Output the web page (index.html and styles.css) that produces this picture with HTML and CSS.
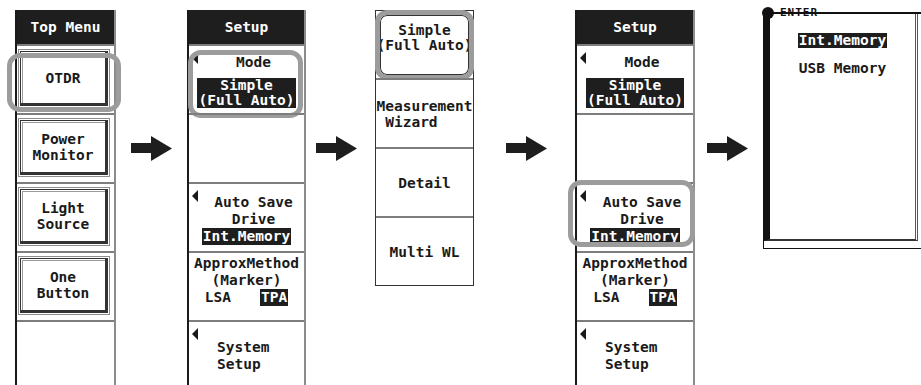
FILE: index.html
```html
<!DOCTYPE html>
<html>

<head>
  <meta charset="UTF-8">
  <title>OTDR Setup</title>
  <link rel="stylesheet" href="styles.css">
</head>

<body>

  <div id="topMenu" class="menu">
    <div class="menu-head">Top Menu</div>
    <div class="slot">
      <div class="btn"><div class="btn-face">OTDR</div></div>
      <div id="markOtdr" class="mark"></div>
    </div>
    <div class="slot">
      <div class="btn"><div class="btn-face">Power<br>Monitor</div></div>
    </div>
    <div class="slot">
      <div class="btn"><div class="btn-face">Light<br>Source</div></div>
    </div>
    <div class="slot">
      <div class="btn"><div class="btn-face">One<br>Button</div></div>
    </div>
    <div class="slot"></div>
  </div>

  <svg id="arrow1" class="arrow" viewBox="0 0 41 25"><rect x="0" y="7" width="22" height="10" /><polygon points="20,0 41,12.5 20,25" /></svg>

  <div id="setupA" class="menu">
    <div class="menu-head">Setup</div>
    <div class="slot mode">
      <span class="tri"></span>
      <div class="label">Mode</div>
      <div class="value two">Simple<br>(Full Auto)</div>
      <div id="markMode" class="mark"></div>
    </div>
    <div class="slot"></div>
    <div class="slot save">
      <span class="tri"></span>
      <div class="label">Auto Save</div>
      <div class="label">Drive</div>
      <div class="value">Int.Memory</div>
    </div>
    <div class="slot approx">
      <div>ApproxMethod</div>
      <div>(Marker)</div>
      <div class="pair"><span>LSA</span><span class="value">TPA</span></div>
    </div>
    <div class="slot system">
      <span class="tri"></span>
      <div>System<br>Setup</div>
    </div>
  </div>

  <svg id="arrow2" class="arrow" viewBox="0 0 41 25"><rect x="0" y="7" width="22" height="10" /><polygon points="20,0 41,12.5 20,25" /></svg>

  <div id="modes">
    <div class="choice first">
      <div>Simple<br>(Full Auto)</div>
      <div id="markSimple" class="mark"></div>
    </div>
    <div class="choice"><div class="pre">Measurement
 Wizard</div></div>
    <div class="choice"><div>Detail</div></div>
    <div class="choice"><div>Multi WL</div></div>
  </div>

  <svg id="arrow3" class="arrow" viewBox="0 0 41 25"><rect x="0" y="7" width="22" height="10" /><polygon points="20,0 41,12.5 20,25" /></svg>

  <div id="setupB" class="menu">
    <div class="menu-head">Setup</div>
    <div class="slot mode">
      <span class="tri"></span>
      <div class="label">Mode</div>
      <div class="value two">Simple<br>(Full Auto)</div>
    </div>
    <div class="slot"></div>
    <div class="slot save">
      <span class="tri"></span>
      <div class="label">Auto Save</div>
      <div class="label">Drive</div>
      <div class="value">Int.Memory</div>
      <div id="markSave" class="mark"></div>
    </div>
    <div class="slot approx">
      <div>ApproxMethod</div>
      <div>(Marker)</div>
      <div class="pair"><span>LSA</span><span class="value">TPA</span></div>
    </div>
    <div class="slot system">
      <span class="tri"></span>
      <div>System<br>Setup</div>
    </div>
  </div>

  <svg id="arrow4" class="arrow" viewBox="0 0 41 25"><rect x="0" y="7" width="22" height="10" /><polygon points="20,0 41,12.5 20,25" /></svg>

  <div id="drive">
    <span class="enter-dot"></span>
    <span class="enter-text">ENTER</span>
    <div class="drive-body">
      <div><span class="value">Int.Memory</span></div>
      <div class="usb">USB Memory</div>
    </div>
  </div>

</body>

</html>
```

FILE: styles.css
```css
* {
  box-sizing: border-box;
}

body {
  margin: 0;
  padding: 10px 0 0 15px;
  width: 921px;
  height: 385px;
  overflow: hidden;
  display: flex;
  align-items: flex-start;

  background-color: #fff;
  color: #1a1a1a;
  font-family: 'DejaVu Sans Mono', 'Liberation Mono', monospace;
  font-weight: bold;
  font-size: 14.5px;
  line-height: 17px;
  text-align: center;
}

/* soft key columns */

.menu {
  flex: none;
  height: 380px;
  border-left: 2px solid #1a1a1a;
  border-right: 2px solid #8c8c8c;
}

#topMenu {
  width: 101px;
}

#setupA {
  width: 119px;
  margin-left: 15px;
}

#setupB {
  width: 120px;
  margin-left: 28px;
}

.menu-head {
  height: 34px;
  background-color: #1e1e1e;
  color: #fff;
  line-height: 34px;
}

.slot {
  position: relative;
  height: 69px;
  border-top: 2px solid #7d7d7d;
}

.btn {
  width: 92px;
  height: 59px;
  margin: 3px 0 0 1px;
  padding: 1px;
  border: 1px solid #8c8c8c;
}

.btn-face {
  height: 100%;
  display: flex;
  align-items: center;
  justify-content: center;
  border: 1px solid #333;
  border-right-width: 3px;
  border-bottom-width: 3px;
  box-shadow: inset 1px 1px 0 #fff, inset 2px 2px 0 #9a9a9a;
  line-height: 16px;
}

.tri {
  position: absolute;
  top: 6px;
  left: 3px;
  border-top: 6px solid transparent;
  border-bottom: 6px solid transparent;
  border-right: 6px solid #1a1a1a;
}

.label {
  padding-left: 14px;
}

.value {
  display: inline-block;
  background-color: #1e1e1e;
  color: #fff;
  padding: 0 1px;
}

.mode {
  padding-top: 8px;
  line-height: 16px;
}

.mode .value {
  margin-top: 8px;
  line-height: 15px;
}

.save {
  padding-top: 10px;
}

.approx {
  padding-top: 2px;
}

.pair {
  display: flex;
  justify-content: center;
  gap: 29px;
}

.system {
  padding: 17px 0 0 28px;
  text-align: left;
}

/* gray call-out rings */

.mark {
  position: absolute;
  border: 5px solid #9c9c9c;
  border-radius: 13px;
}

#markOtdr {
  left: -10px;
  top: 7px;
  width: 114px;
  height: 59px;
}

#markMode {
  left: -1px;
  top: 4px;
  width: 115px;
  height: 68px;
}

#markSave {
  left: -9px;
  top: -4px;
  width: 127px;
  height: 67px;
}

#markSimple {
  left: -1px;
  top: -1px;
  width: 99px;
  height: 70px;
  border-radius: 12px;
  box-shadow: inset 0 0 0 1px #333;
}

/* arrows */

.arrow {
  flex: none;
  width: 41px;
  height: 25px;
  margin-top: 126px;
  fill: #1e1e1e;
}

#arrow1 {
  margin-left: 15px;
}

#arrow2 {
  margin-left: 10px;
}

#arrow3 {
  margin-left: 32px;
}

#arrow4 {
  margin-left: 12px;
}

/* mode choice list */

#modes {
  flex: none;
  width: 99px;
  margin-left: 18px;
  border: 1px solid #333;
}

.choice {
  position: relative;
  height: 67px;
  display: flex;
  align-items: center;
  justify-content: center;
  line-height: 16px;
  overflow: hidden;
}

.choice + .choice {
  height: 69px;
  border-top: 2px solid #7d7d7d;
}

.choice.first {
  align-items: flex-start;
  padding-top: 12px;
  line-height: 15px;
  overflow: visible;
}

.pre {
  white-space: pre;
  text-align: left;
}

/* drive popup */

#drive {
  flex: none;
  position: relative;
  width: 158px;
  height: 237px;
  margin: 2px 0 0 15px;
  padding: 0 3px 7px 0;
  border-top: 2px solid #111;
  border-left: 1px solid #111;
  border-bottom: 1px solid #111;
}

.drive-body {
  height: 100%;
  padding-top: 19px;
  border-left: 6px solid #111;
  border-bottom: 2px solid #333;
  border-right: 3px double #555;
  line-height: 15px;
}

.usb {
  margin-top: 13px;
}

.enter-dot {
  position: absolute;
  left: -2px;
  top: -7px;
  width: 12px;
  height: 12px;
  border-radius: 50%;
  background-color: #111;
}

.enter-text {
  position: absolute;
  left: 16px;
  top: -7px;
  font-size: 11px;
  line-height: 11px;
  letter-spacing: 1px;
  color: #111;
  text-decoration: line-through;
  text-decoration-thickness: 2px;
}
```
